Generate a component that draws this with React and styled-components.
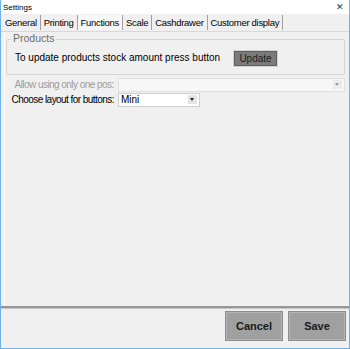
import styled, { createGlobalStyle } from "styled-components";

const GlobalStyle = createGlobalStyle`
  html, body {
    margin: 0;
    padding: 0;
    width: 350px;
    height: 349px;
    overflow: hidden;
    font-family: "Liberation Sans", Arial, sans-serif;
  }
`;

const tabs = ["General", "Printing", "Functions", "Scale", "Cashdrawer", "Customer display"];

const App = () => {
  return (
    <>
      <GlobalStyle />
      <Window>
        <TitleBar>
          <Title>Settings</Title>
          <Close>✕</Close>
        </TitleBar>

        <TabStrip>
          {tabs.map((t) => (
            <Tab key={t} $active={t === "Functions"}>
              {t}
            </Tab>
          ))}
        </TabStrip>

        <Panel>
          <GroupBox>
            <Legend>Products</Legend>
            <GroupRow>
              <span>To update products stock amount press button</span>
              <UpdateButton>Update</UpdateButton>
            </GroupRow>
          </GroupBox>

          <FieldRow>
            <Label $disabled>Allow using only one pos:</Label>
            <Combo $disabled $wide>
              <ComboValue />
              <Arrow $disabled />
            </Combo>
          </FieldRow>
          <FieldRow>
            <Label>Choose layout for buttons:</Label>
            <Combo>
              <ComboValue>Mini</ComboValue>
              <Arrow />
            </Combo>
          </FieldRow>
        </Panel>

        <Footer>
          <FooterButton>Cancel</FooterButton>
          <FooterButton>Save</FooterButton>
        </Footer>
      </Window>
    </>
  );
};

export default App;

const Window = styled.div`
  box-sizing: border-box;
  width: 350px;
  height: 349px;
  display: flex;
  flex-direction: column;
  background: #f0f0f0;
  border: 1px solid #6fb1e9;
  border-top: none;
`;

const TitleBar = styled.div`
  height: 14px;
  background: #ffffff;
  display: flex;
  align-items: center;
  justify-content: space-between;
  padding: 0 5px 0 2px;
`;

const Title = styled.span`
  font-size: 8px;
  color: #000;
`;

const Close = styled.span`
  font-size: 9px;
  color: #333;
`;

const TabStrip = styled.div`
  display: flex;
  align-items: center;
  height: 17px;
  padding: 0 1px;
  border-bottom: 1px solid #d9d9d9;
  background: #f0f0f0;
`;

const Tab = styled.div`
  font-size: 9.5px;
  letter-spacing: -0.3px;
  white-space: nowrap;
  color: #000;
  padding: 0 3px;
  line-height: 15px;
  border-right: 1px solid #a0a0a0;
  background: ${(p) => (p.$active ? "#f7f7f7" : "transparent")};
  ${(p) => p.$active && "margin-top: -1px;"}
`;

const Panel = styled.div`
  flex: 1;
  margin: 0 3px;
  padding: 7px 1px 0 1px;
  border-left: 1px solid #fcfcfc;
  display: flex;
  flex-direction: column;
`;

const GroupBox = styled.div`
  position: relative;
  border: 1px solid #d5d5d5;
  border-radius: 2px;
  height: 36px;
  padding: 8px 10px 0 8px;
  box-sizing: border-box;
  margin-bottom: 2px;
`;

const Legend = styled.span`
  position: absolute;
  top: -8px;
  left: 4px;
  padding: 0 2px;
  font-size: 10.5px;
  color: #6d6d6d;
  background: #f0f0f0;
`;

const GroupRow = styled.div`
  display: flex;
  align-items: center;
  font-size: 10px;
  color: #000;

  span {
    flex: 1;
    white-space: nowrap;
  }
`;

const UpdateButton = styled.div`
  width: 43px;
  height: 15px;
  box-sizing: border-box;
  margin-right: 57px;
  margin-top: 3px;
  background: #7b7b7b;
  border: 1px solid #5f5f5f;
  box-shadow: 0 0 0 1px #d2d2d2;
  font-size: 10px;
  color: #1e1e1e;
  display: flex;
  align-items: center;
  justify-content: center;
`;

const FieldRow = styled.div`
  display: flex;
  align-items: center;
  height: 15px;
`;

const Label = styled.div`
  width: 108px;
  white-space: nowrap;
  text-align: right;
  padding-right: 4px;
  font-size: 10px;
  letter-spacing: -0.55px;
  color: ${(p) => (p.$disabled ? "#9c9c9c" : "#000")};
`;

const Combo = styled.div`
  box-sizing: border-box;
  height: 14px;
  width: ${(p) => (p.$wide ? "228px" : "82px")};
  display: flex;
  align-items: center;
  background: ${(p) => (p.$disabled ? "#f7f7f7" : "#ffffff")};
  border: 1px solid ${(p) => (p.$disabled ? "#e0e0e0" : "#cfcfcf")};
`;

const ComboValue = styled.div`
  flex: 1;
  font-size: 10px;
  padding-left: 2px;
  color: #000;
`;

const Arrow = styled.div`
  width: 9px;
  height: 9px;
  margin-right: 2px;
  background: ${(p) => (p.$disabled ? "#ececec" : "#e4e4e4")};
  position: relative;

  &::after {
    content: "";
    position: absolute;
    left: 2px;
    top: 3px;
    border-left: 2.5px solid transparent;
    border-right: 2.5px solid transparent;
    border-top: 3px solid ${(p) => (p.$disabled ? "#9a9a9a" : "#222")};
  }
`;

const Footer = styled.div`
  height: 37px;
  border-top: 2px solid #979797;
  box-shadow: inset 0 1px 0 #c8c8c8;
  display: flex;
  justify-content: flex-end;
  align-items: flex-start;
  gap: 5px;
  padding: 3px 3px 0 0;
`;

const FooterButton = styled.div`
  box-sizing: border-box;
  width: 58px;
  height: 30px;
  background: #a0a0a0;
  border: 1px solid #8c8c8c;
  box-shadow: inset 0 0 0 1px #b4b4b4;
  font-size: 11px;
  font-weight: bold;
  color: #1a1a1a;
  display: flex;
  align-items: center;
  justify-content: center;
`;
